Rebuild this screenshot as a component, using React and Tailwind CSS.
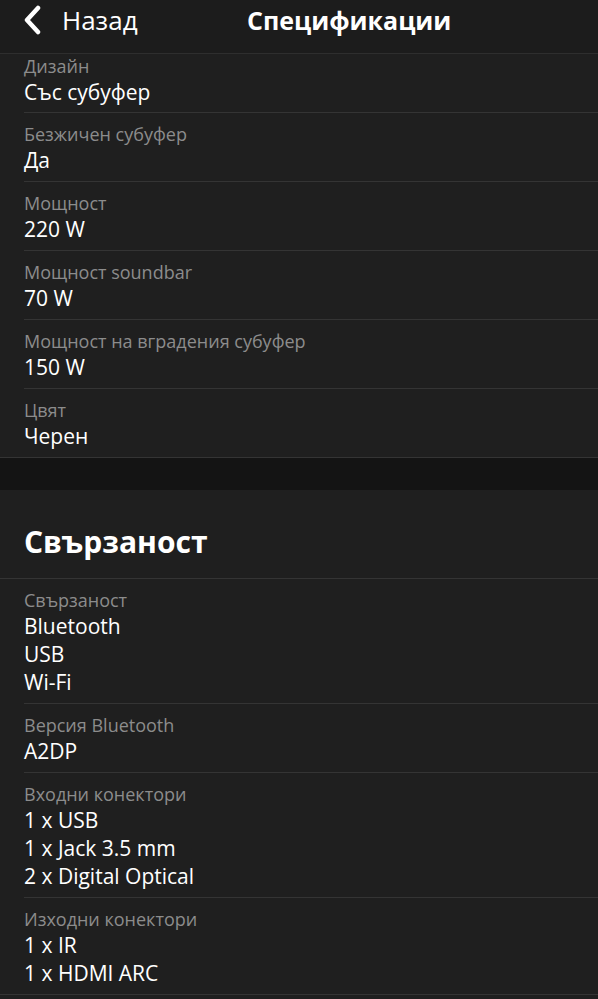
const design = [
  { label: 'Дизайн', values: ['Със субуфер'] },
  { label: 'Безжичен субуфер', values: ['Да'] },
  { label: 'Мощност', values: ['220 W'] },
  { label: 'Мощност soundbar', values: ['70 W'] },
  { label: 'Мощност на вградения субуфер', values: ['150 W'] },
  { label: 'Цвят', values: ['Черен'] },
];

const connectivity = [
  { label: 'Свързаност', values: ['Bluetooth', 'USB', 'Wi-Fi'] },
  { label: 'Версия Bluetooth', values: ['A2DP'] },
  { label: 'Входни конектори', values: ['1 x USB', '1 x Jack 3.5 mm', '2 x Digital Optical'] },
  { label: 'Изходни конектори', values: ['1 x IR', '1 x HDMI ARC'] },
];

function SpecRow({ spec, first, last }) {
  return (
    <div className={`ml-6 ${last ? '' : 'border-b border-[#343434]'} ${first ? 'pt-0 pb-[6px]' : 'pt-[9px] pb-[7px]'}`}>
      <div className="text-[18px] leading-[24px] text-[#8c8c8c]">{spec.label}</div>
      {spec.values.map((v) => (
        <div key={v} className="text-[21px] leading-[28px] text-white">{v}</div>
      ))}
    </div>
  );
}

export default function App() {
  return (
    <div className="min-h-[999px] bg-[#1f1f1f]" style={{ fontFamily: '"Open Sans", "Noto Sans", sans-serif' }}>
      <div className="h-[54px] bg-[#1c1c1c] border-b border-[#2e2e2e] flex items-center relative pb-[14px]">
        <div className="flex items-center pl-[24px] gap-[20px]">
          <svg width="18" height="30" viewBox="0 0 18 30" fill="none" stroke="white" strokeWidth="4.5" strokeLinecap="round" strokeLinejoin="round">
            <polyline points="14,3 3,15 14,27" />
          </svg>
          <span className="text-[26px] leading-none text-white">Назад</span>
        </div>
        <div className="absolute left-[247px] top-0 h-[40px] flex items-center text-[25px] leading-none font-bold text-white">Спецификации</div>
      </div>

      <div className="border-b border-[#343434]">
        {design.map((s, i) => (
          <SpecRow key={s.label} spec={s} first={i === 0} last={i === design.length - 1} />
        ))}
      </div>

      <div className="h-[32px] bg-[#141414]" />

      <div className="h-[89px] flex items-end px-6 pb-[16px] border-b border-[#343434]">
        <h2 className="text-[30px] leading-[40px] font-bold text-white">Свързаност</h2>
      </div>

      <div className="border-b border-[#343434]">
        {connectivity.map((s, i) => (
          <SpecRow key={s.label} spec={s} last={i === connectivity.length - 1} />
        ))}
      </div>
    </div>
  );
}
